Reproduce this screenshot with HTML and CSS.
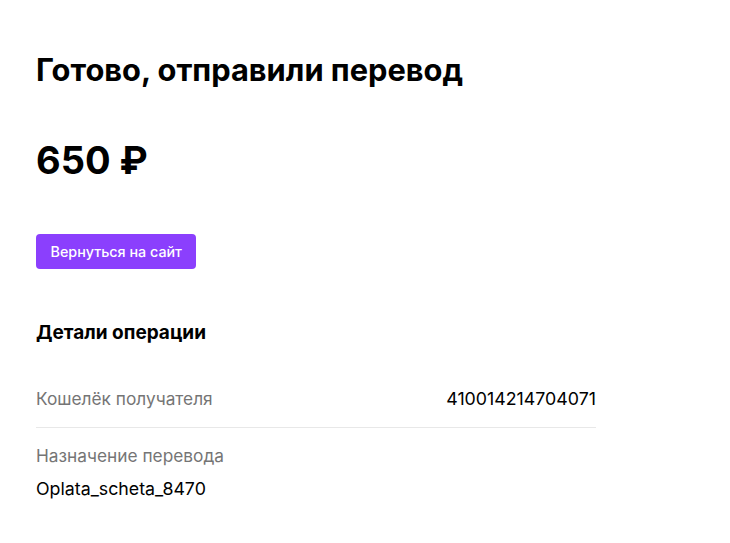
FILE: index.html
```html
<!DOCTYPE html>
<html lang="ru">
<head>
  <meta charset="UTF-8" />
  <meta name="viewport" content="width=device-width, initial-scale=1.0" />
  <title>Готово, отправили перевод</title>
  <link rel="stylesheet" href="styles.css">
</head>
<body>
  <main class="page">
    <h1 class="title">Готово, отправили перевод</h1>
    <div class="amount">650 ₽</div>
    <button class="back-btn">Вернуться на сайт</button>

    <h2 class="details-title">Детали операции</h2>
    <div class="details">
      <div class="row row-inline">
        <span class="label">Кошелёк получателя</span>
        <span class="value">410014214704071</span>
      </div>
      <div class="row">
        <div class="label">Назначение перевода</div>
        <div class="value">Oplata_scheta_8470</div>
      </div>
    </div>
  </main>
</body>
</html>
```

FILE: styles.css
```css
body {
  font-family: Inter, "Noto Sans", sans-serif;
  background-color: #fff;
  margin: 0;
  color: #000;
}
.page {
  width: 560px;
  padding: 50px 36px;
}
.title {
  font-size: 30.8px;
  font-weight: 700;
  line-height: 40px;
  margin: 0;
}
.amount {
  font-size: 38px;
  font-weight: 700;
  line-height: 48px;
  margin-top: 46px;
}
.back-btn {
  display: block;
  margin-top: 50px;
  height: 35px;
  padding: 0 14.5px;
  border: none;
  border-radius: 4px;
  background-color: #8b3ffd;
  color: #fff;
  font-family: inherit;
  font-size: 14.3px;
  font-weight: 500;
}
.details-title {
  font-size: 19px;
  font-weight: 700;
  line-height: 24px;
  margin: 52px 0 0;
}
.details {
  margin-top: 26px;
}
.row {
  padding: 16px 0;
  font-size: 17.3px;
  line-height: 24px;
}
.row-inline {
  display: flex;
  justify-content: space-between;
  border-bottom: 1px solid #e8e8e8;
}
.label {
  color: #757575;
}
.row .value {
  color: #000;
  font-size: 17.8px;
}
.row:not(.row-inline) .value {
  margin-top: 9px;
}
```
